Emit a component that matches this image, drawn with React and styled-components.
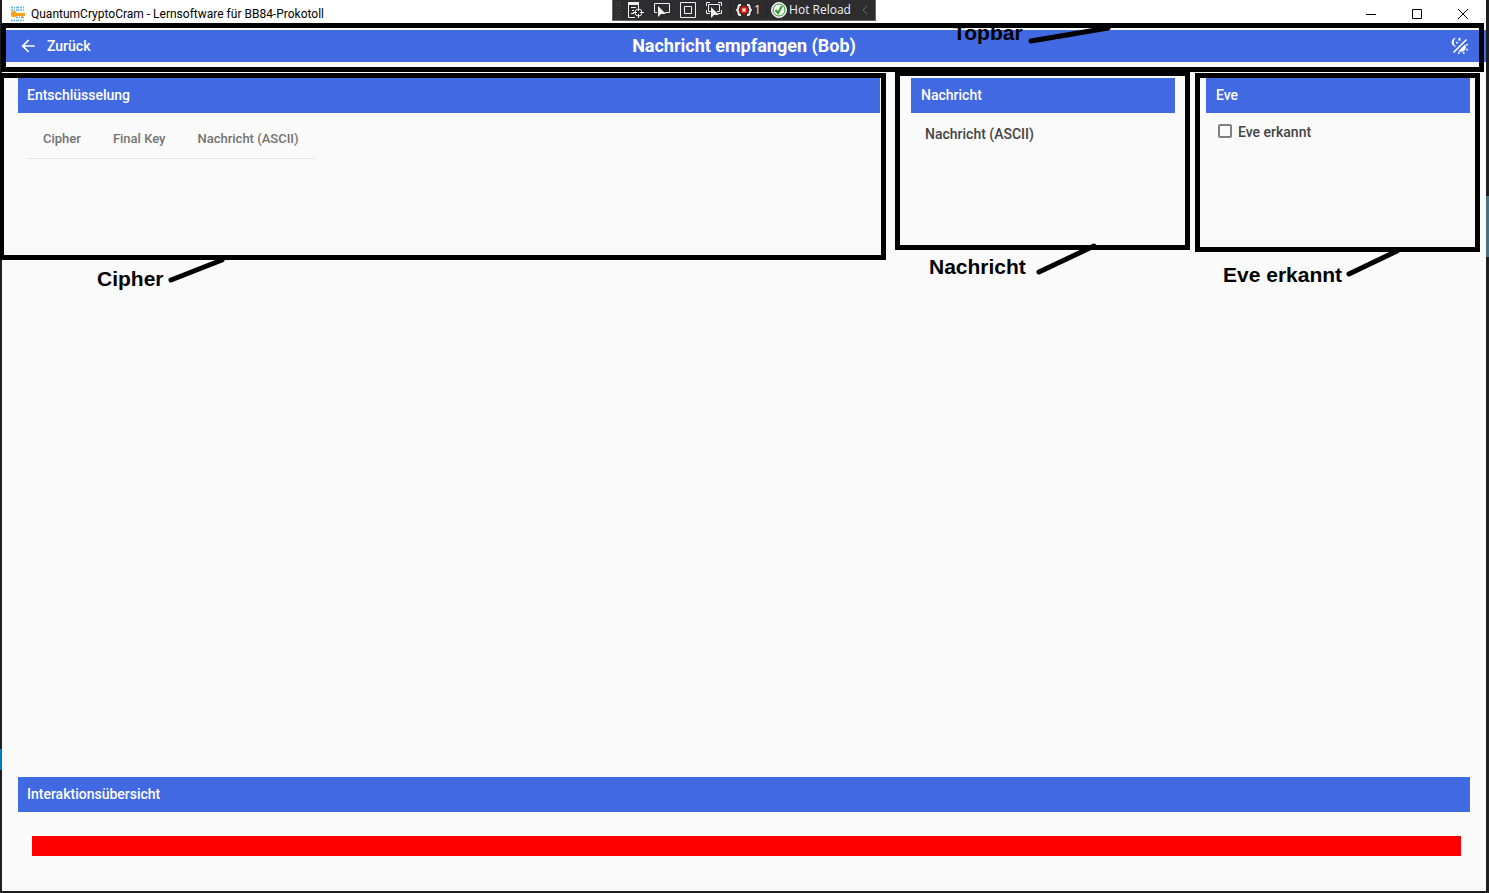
import React from "react";
import styled, { createGlobalStyle } from "styled-components";

const GlobalStyle = createGlobalStyle`
  * { box-sizing: border-box; }
  body {
    margin: 0;
    font-family: Roboto, "Liberation Sans", sans-serif;
    color: #444;
    background:
      linear-gradient(#007acc, #007acc) left 749px / 2px 21px no-repeat,
      linear-gradient(#4a7080, #4a7080) right 196px / 3px 61px no-repeat,
      #1e1e1e;
  }
`;

const Desktop = styled.div`
  display: flex;
  min-height: 100vh;
  padding: 0 3px 2px 2px;
  overflow: hidden;
`;

const AppWindow = styled.div`
  position: relative;
  flex: 1;
  min-width: 0;
  display: flex;
  flex-direction: column;
  background: #fafafa;
`;

const TitleBar = styled.header`
  display: flex;
  align-items: center;
  height: 30px;
  padding: 0 0 2px 8px;
  background: #fff;
  color: #000;
`;

const WindowTitle = styled.span`
  flex: 1;
  margin-left: 5px;
  font: 12px/16px Roboto, "Open Sans", sans-serif;
`;

const CaptionButton = styled.button`
  display: grid;
  place-items: center;
  width: 46px;
  height: 28px;
  padding: 0;
  border: 0;
  background: none;
`;

const DebugBar = styled.div`
  position: absolute;
  top: 0;
  left: 50%;
  transform: translateX(-50%);
  display: flex;
  align-items: center;
  width: 264px;
  height: 21px;
  border: 1px solid #68686c;
  border-top: 0;
  background: #2d2d30;
  color: #f1f1f1;
`;

const DebugButton = styled.button`
  display: flex;
  align-items: center;
  justify-content: center;
  gap: 2px;
  width: ${(p) => p.$width || 26}px;
  height: 20px;
  padding: 0;
  border: 0;
  background: none;
  color: inherit;
  font: 12px/20px "Open Sans", "Noto Sans", sans-serif;
  white-space: nowrap;
`;

const DebugGroup = styled.div`
  display: flex;
  padding-right: 3px;
`;

const Divider = styled.span`
  width: 1px;
  height: 14px;
  background: #222224;
`;

const TopBar = styled.nav`
  position: relative;
  display: grid;
  grid-template-columns: 1fr auto 1fr;
  align-items: center;
  height: 32px;
  padding: 0 16px;
  background: #4169e1;
  color: #fff;
`;

const BackLink = styled.a`
  display: flex;
  align-items: center;
  gap: 9px;
  color: inherit;
  font-size: 14px;
  font-weight: 500;
  line-height: 20px;
  text-decoration: none;
`;

const PageTitle = styled.h1`
  margin: 0;
  font-size: 18px;
  font-weight: 700;
  line-height: 24px;
`;

const ThemeButton = styled.button`
  justify-self: end;
  display: flex;
  padding: 0;
  border: 0;
  background: none;
  color: inherit;
`;

const Content = styled.main`
  flex: 1;
  display: flex;
  flex-direction: column;
  justify-content: space-between;
  padding: 16px 16px 35px;
`;

const PanelRow = styled.div`
  display: grid;
  grid-template-columns: minmax(0, 1fr) 264px 264px;
  gap: 31px;
`;

const Panel = styled.section`
  position: relative;
`;

const PanelTitle = styled.h2`
  margin: 0;
  padding: 0 ${(p) => p.$inset || 9}px;
  background: #4169e1;
  color: #fff;
  font-size: 14px;
  font-weight: 500;
  line-height: 35px;
`;

const KeyTable = styled.table`
  margin-left: 9px;
  border-collapse: collapse;

  th {
    height: 45px;
    padding: 8px 16px 0;
    border-bottom: 1px solid #e4e4e4;
    color: #737373;
    font-size: 13px;
    font-weight: 500;
    line-height: 20px;
    text-align: left;
    white-space: nowrap;
  }
`;

const MessageText = styled.p`
  margin: 11px 14px;
  font-size: 14px;
  font-weight: 500;
  line-height: 20px;
`;

const CheckLabel = styled.label`
  display: flex;
  align-items: center;
  gap: 6px;
  margin: 9px 12px;
  font-size: 14px;
  font-weight: 500;
  line-height: 20px;
`;

const CheckBox = styled.input`
  appearance: none;
  width: 14px;
  height: 14px;
  margin: 0 0 2px;
  border: 2px solid #808080;
  border-radius: 2px;
`;

const StatusBar = styled.div`
  height: 20px;
  margin: 24px 9px 0 14px;
  background: #f00;
`;

const Frame = styled.div`
  position: absolute;
  z-index: 2;
  top: ${(p) => p.$top}px;
  left: ${(p) => p.$left}px;
  right: ${(p) => p.$right}px;
  height: ${(p) => p.$height}px;
  border: 5px solid #000;
  pointer-events: none;
`;

const Callout = styled.span`
  position: absolute;
  z-index: 3;
  top: ${(p) => p.$y}px;
  left: ${(p) => p.$x}px;
  color: #000;
  font: bold 21px/24px "Liberation Sans", Arial, sans-serif;
  white-space: nowrap;
`;

const Leader = styled.svg`
  position: absolute;
  z-index: 3;
  top: ${(p) => p.$y}px;
  left: ${(p) => p.$x}px;
  overflow: visible;
`;

function Annotation({ text, frame, label, line }) {
  const [top, right, left, height] = frame;
  const [x, y, dx, dy] = line;
  return (
    <>
      <Frame $top={top} $right={right} $left={left} $height={height} />
      <Callout $x={label[0]} $y={label[1]}>{text}</Callout>
      <Leader $x={x} $y={y} width={dx} height={dy} aria-hidden="true">
        <path d={`M0 ${dy}L${dx} 0`} stroke="#000" strokeWidth="5" strokeLinecap="round" />
      </Leader>
    </>
  );
}

function AppIcon() {
  return (
    <svg width="16" height="16" viewBox="0 0 16 16" aria-hidden="true">
      <path d="M1 1.5h14M1 4h14M6 11.5h9M1 14.5h14" stroke="#5fb4e0" strokeWidth="1.5" strokeDasharray="2 1 1 1 3 1" />
      <path d="M3 5h2l2 2h8v3h-2v1h-2v-1H7l-2 1H2L1 9V6z" fill="#f9a11b" />
    </svg>
  );
}

function MoonSun() {
  return (
    <svg width="20" height="20" viewBox="0 0 24 24" fill="currentColor" aria-hidden="true">
      <path d="M7.5,2C5.71,3.15 4.5,5.18 4.5,7.5C4.5,9.82 5.71,11.85 7.53,13C4.46,13 2,10.54 2,7.5A5.5,5.5 0 0,1 7.5,2M19.07,3.5L20.5,4.93L4.93,20.5L3.5,19.07L19.07,3.5M12.89,5.93L11.41,5L9.97,6L10.39,4.3L9,3.24L10.75,3.12L11.33,1.47L12,3.1L13.73,3.13L12.38,4.26L12.89,5.93M9.59,9.54L8.43,8.81L7.31,9.59L7.65,8.27L6.56,7.44L7.92,7.35L8.37,6.06L8.88,7.33L10.24,7.36L9.19,8.23L9.59,9.54M19,13.5A5.5,5.5 0 0,1 13.5,19C12.28,19 11.15,18.6 10.24,17.93L17.93,10.24C18.6,11.15 19,12.28 19,13.5M14.6,20.08L17.37,18.93L17.13,22.28L14.6,20.08M18.93,17.38L20.08,14.61L22.28,17.15L18.93,17.38M20.08,12.42L18.94,9.64L22.28,9.88L20.08,12.42M9.63,18.93L12.4,20.08L9.87,22.27L9.63,18.93Z" />
    </svg>
  );
}

function DebugIcon({ children, width = 16 }) {
  return (
    <svg width={width} height="16" viewBox={`0 0 ${width} 16`} fill="none" stroke="#f1f1f1" aria-hidden="true">
      {children}
    </svg>
  );
}

const CURSOR = "M0 0v11l3-3h5z";

function DebugToolbar() {
  return (
    <DebugBar>
      <DebugGroup>
        <DebugButton $width={10} aria-label="Verschieben">
          <svg width="6" height="18" aria-hidden="true">
            <path d="M1 1v17M5 1v17M3 3v15" stroke="#66666a" strokeDasharray="1 3" />
          </svg>
        </DebugButton>
        <DebugButton aria-label="Visuelle Struktur">
          <DebugIcon>
            <path d="M0 1.500h11" strokeWidth="3" />
            <path d="M.5 2v13.500H7M10.500 2v3M3 5.500h5M4 8.500h2M3 11.500h3" />
            <circle cx="10.500" cy="10.500" r="3.500" />
            <path d="M10.500 5v4M10.500 12v4M5 10.500h4M12 10.500h4" />
          </DebugIcon>
        </DebugButton>
        <DebugButton aria-label="Element auswählen">
          <DebugIcon>
            <path d="M3 10.500H.5v-9h15v9H11" />
            <path d={CURSOR} transform="translate(4 4)" fill="#f1f1f1" stroke="none" />
          </DebugIcon>
        </DebugButton>
        <DebugButton aria-label="Layout anzeigen">
          <DebugIcon>
            <path d="M.5.5h15v15H.5zM4.500 4.500h7v7h-7z" />
          </DebugIcon>
        </DebugButton>
        <DebugButton aria-label="Fokus verfolgen">
          <DebugIcon>
            <path d="M.5 4V.5H4M12 .5h3.500V4M15.500 8v3.500H12M.5 8v3.500H4M5 9.500H2.500v-7h11v7H11" />
            <path d={CURSOR} transform="translate(5 5)" fill="#f1f1f1" stroke="none" />
          </DebugIcon>
        </DebugButton>
      </DebugGroup>
      <Divider />
      <DebugButton $width={35}>
        <DebugIcon>
          <path d="M5 3H4Q2.500 3 2.500 5T1 8Q2.500 9 2.500 11T4 13h1M11 3h1q1.500 0 1.500 2T15 8q-1.500 1-1.500 3T12 13h-1" strokeWidth="2" />
          <circle cx="8" cy="8" r="3.500" fill="#e51400" stroke="#e51400" />
          <path d="M6.500 6.500l3 3M9.500 6.500l-3 3" strokeWidth="1.500" />
        </DebugIcon>
        1
      </DebugButton>
      <Divider />
      <DebugButton $width={88}>
        <DebugIcon>
          <circle cx="8" cy="8" r="7.500" fill="#f1f1f1" />
          <circle cx="8" cy="8" r="6" stroke="#339933" />
          <path d="M4.500 8l2.500 3 4-7" stroke="#339933" strokeWidth="2" />
        </DebugIcon>
        Hot Reload
      </DebugButton>
      <DebugButton $width={20} aria-label="Einklappen">
        <svg width="6" height="10" fill="none" stroke="#66666a" aria-hidden="true">
          <path d="M5.500.5L1 5l4.500 4.500" />
        </svg>
      </DebugButton>
    </DebugBar>
  );
}

export default function App() {
  return (
    <>
      <GlobalStyle />
      <Desktop>
        <AppWindow>
          <TitleBar>
            <AppIcon />
            <WindowTitle>QuantumCryptoCram - Lernsoftware für BB84-Prokotoll</WindowTitle>
            <CaptionButton aria-label="Minimieren">
              <svg width="10" height="10"><path d="M0 5.500h10" stroke="#000" /></svg>
            </CaptionButton>
            <CaptionButton aria-label="Maximieren">
              <svg width="10" height="10"><path d="M.5.5h9v9h-9z" fill="none" stroke="#000" /></svg>
            </CaptionButton>
            <CaptionButton aria-label="Schließen">
              <svg width="10" height="10"><path d="M0 0l10 10M10 0l-10 10" stroke="#000" /></svg>
            </CaptionButton>
          </TitleBar>
          <DebugToolbar />

          <TopBar>
            <BackLink href="#">
              <svg width="20" height="20" viewBox="0 0 24 24" fill="currentColor" aria-hidden="true">
                <path d="M20,11V13H8L13.5,18.5L12.08,19.92L4.16,12L12.08,4.08L13.5,5.5L8,11H20Z" />
              </svg>
              Zurück
            </BackLink>
            <PageTitle>Nachricht empfangen (Bob)</PageTitle>
            <ThemeButton aria-label="Farbschema wechseln"><MoonSun /></ThemeButton>
            <Annotation text="Topbar" frame={[-7, 2, -1, 49]} label={[951, -9]} line={[1029, -2, 77, 13]} />
          </TopBar>

          <Content>
            <PanelRow>
              <Panel>
                <PanelTitle>Entschlüsselung</PanelTitle>
                <KeyTable>
                  <thead>
                    <tr>
                      <th scope="col">Cipher</th>
                      <th scope="col">Final Key</th>
                      <th scope="col">Nachricht (ASCII)</th>
                    </tr>
                  </thead>
                </KeyTable>
                <Annotation text="Cipher" frame={[-5, -6, -19, 187]} label={[79, 189]} line={[153, 182, 51, 20]} />
              </Panel>
              <Panel>
                <PanelTitle $inset={10}>Nachricht</PanelTitle>
                <MessageText>Nachricht (ASCII)</MessageText>
                <Annotation text="Nachricht" frame={[-7, -15, -16, 179]} label={[18, 177]} line={[128, 168, 55, 26]} />
              </Panel>
              <Panel>
                <PanelTitle $inset={10}>Eve</PanelTitle>
                <CheckLabel>
                  <CheckBox type="checkbox" />
                  Eve erkannt
                </CheckLabel>
                <Annotation text="Eve erkannt" frame={[-5, -10, -11, 179]} label={[17, 185]} line={[143, 173, 48, 23]} />
              </Panel>
            </PanelRow>
            <Panel>
              <PanelTitle>Interaktionsübersicht</PanelTitle>
              <StatusBar />
            </Panel>
          </Content>
        </AppWindow>
      </Desktop>
    </>
  );
}
